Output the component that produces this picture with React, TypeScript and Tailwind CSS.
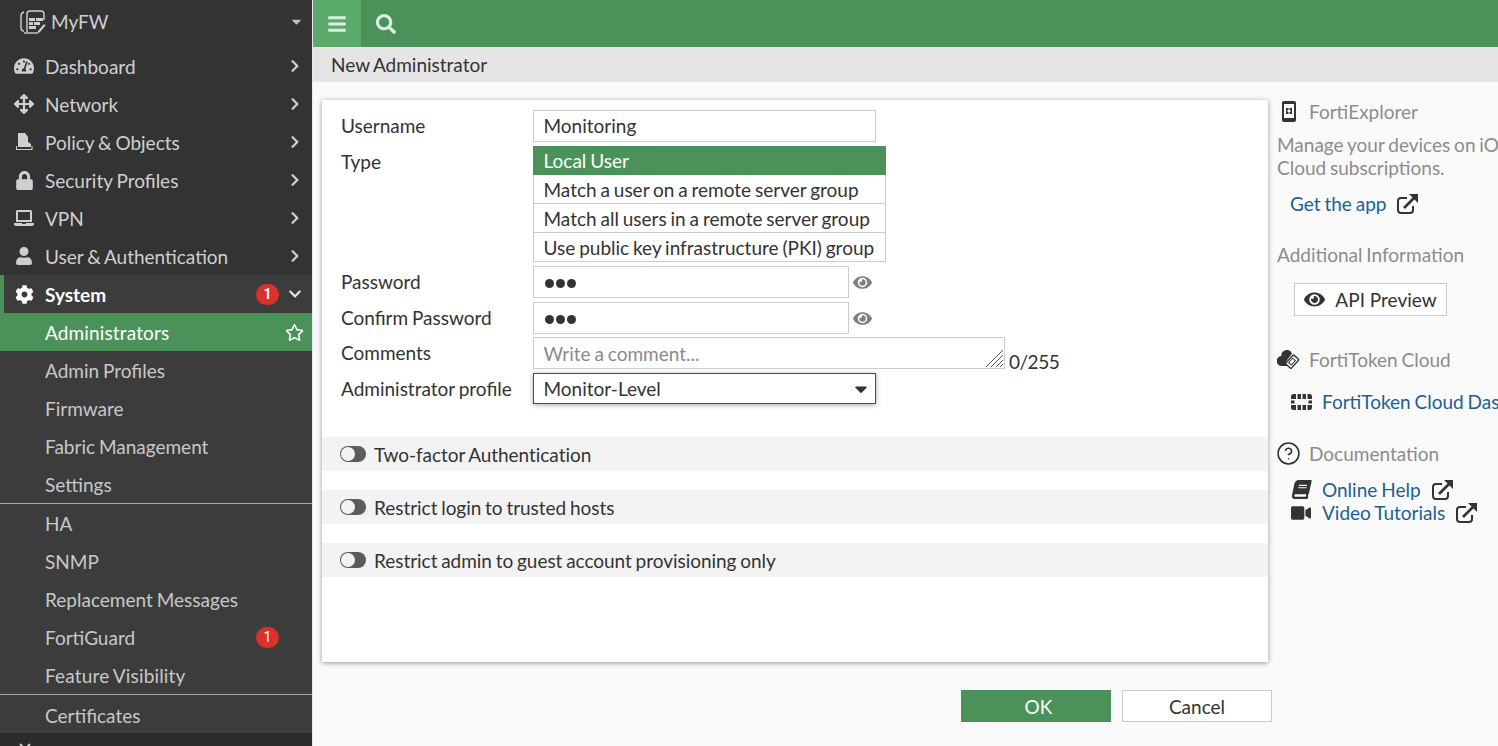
import React from 'react';
import {
  FaTachometerAlt,
  FaArrowsAlt,
  FaLock,
  FaLaptop,
  FaUser,
  FaCog,
  FaChevronRight,
  FaChevronDown,
  FaRegStar,
  FaBars,
  FaSearch,
  FaEye,
  FaBook,
  FaVideo,
  FaCaretDown,
} from 'react-icons/fa';
import { CircleHelp } from 'lucide-react';

const LogoIcon = () => (
  <svg width="26" height="26" viewBox="0 0 26 26" fill="none">
    <path d="M4 23a3 3 0 0 1-3-3V8a4 4 0 0 1 3-4" stroke="#cfcfcf" strokeWidth="1.400" />
    <path d="M7 24V6a3 3 0 0 1 3-3h11a3 3 0 0 1 3 3v6" stroke="#cfcfcf" strokeWidth="1.400" />
    <path d="M4 25h14" stroke="#cfcfcf" strokeWidth="1.400" />
    <path d="M9 10h6v3H9zM16 10h7v3h-7zM9 14h4v3H9zM14 14h6v3h-6zM9 18h7v3H9z" fill="#cfcfcf" />
    <path d="m18 23 6-7 1.500 1.500-6 7-2 .5z" fill="#cfcfcf" />
  </svg>
);

const PolicyIcon = () => (
  <svg width="18" height="18" viewBox="0 0 18 18" fill="#cfcfcf">
    <path d="M3 0h7l3 4v5l3 2v3H3z" />
    <path d="M1 13v4h16.500v-4h-1v3H2v-3z" />
  </svg>
);

const PhoneIcon = () => (
  <svg width="14" height="21" viewBox="0 0 14 21">
    <rect x="0" y="0" width="14" height="21" rx="2" fill="#333" />
    <rect x="2" y="3" width="10" height="14" fill="#fff" />
    <path d="M4 7h2.500v2H5.500v2H6.500v2H4zM10 7H7.500v2h1v2h-1v2H10z" fill="#333" />
  </svg>
);

const TokenCloudIcon = () => (
  <svg width="23" height="19" viewBox="0 0 23 19" className="-ml-[1px]">
    <path d="M5 16a5 5 0 0 1-.6-10A5.500 5.500 0 0 1 15 3.500l-6 8 2.500 4.500z" fill="#333" />
    <rect x="11.500" y="5.500" width="7.500" height="12" rx="1" transform="rotate(42 15 11.500)" fill="#fff" stroke="#333" strokeWidth="1.400" />
    <rect x="13.300" y="8.500" width="3.500" height="6" transform="rotate(42 15 11.500)" fill="none" stroke="#333" strokeWidth="1" />
  </svg>
);

const TokenGridIcon = () => (
  <svg width="21" height="16" viewBox="0 0 21 16" fill="#333" className="shrink-0">
    <path d="M0 2.500A2.500 2.500 0 0 1 2.500 0H5v5H0zM6.500 0h3.500v5H6.500zM11.500 0H15v5h-3.500zM16.500 0h2A2.500 2.500 0 0 1 21 2.500V5h-4.500z" />
    <path d="M0 6.500h3.500v3H0zM17.500 6.500H21v3h-3.500z" />
    <path d="M0 11h5v5H2.500A2.500 2.500 0 0 1 0 13.500zM6.500 11h3.500v5H6.500zM11.500 11H15v5h-3.500zM16.500 11H21v2.500a2.500 2.500 0 0 1-2.500 2.500h-2z" />
  </svg>
);

const ExtLink = () => (
  <svg width="21" height="20" viewBox="0 0 21 20" fill="none" className="shrink-0">
    <path d="M10 4H4a3 3 0 0 0-3 3v9a3 3 0 0 0 3 3h9a3 3 0 0 0 3-3v-4" stroke="#333" strokeWidth="2" />
    <path d="m7 14 10-10" stroke="#333" strokeWidth="2.600" />
    <path d="M12 0h9v9z" fill="#333" />
  </svg>
);

const Badge = () => (
  <span className="flex h-[21px] w-[23px] items-center justify-center rounded-full bg-[#d9312b] font-['Roboto',sans-serif] text-[14px] leading-none text-white">
    1
  </span>
);

const NavItem = ({ icon, label }: { icon: React.ReactNode; label: string }) => (
  <div className="flex h-[38px] shrink-0 items-center text-[#cfcfcf]">
    <span className="flex w-[45px] shrink-0 items-center justify-center pl-[3px]">{icon}</span>
    <span className="flex-1">{label}</span>
    <FaChevronRight size={14} className="mr-[10px] text-[#cfcfcf]" />
  </div>
);

const SubItem = ({ label, badge, className }: { label: string; badge?: boolean; className?: string }) => (
  <div className="flex h-[38px] items-center justify-between pl-[45px] pr-[33px] text-[#c8c8c8]">
    <span className={className}>{label}</span>
    {badge && <Badge />}
  </div>
);

const Sidebar = () => (
  <aside className="flex h-full w-[313px] shrink-0 flex-col overflow-hidden border-r border-[#e9e9e9] bg-[#333333]">
    <div className="flex h-[47px] shrink-0 items-center pb-[5px] pl-[20px] pr-[8px] text-[#cfcfcf]">
      <LogoIcon />
      <span className="ml-[5px] flex-1">MyFW</span>
      <FaCaretDown size={15} className="text-[#bdbdbd]" />
    </div>
    <NavItem icon={<FaTachometerAlt size={20} />} label="Dashboard" />
    <NavItem icon={<FaArrowsAlt size={20} />} label="Network" />
    <NavItem icon={<PolicyIcon />} label="Policy & Objects" />
    <NavItem icon={<FaLock size={19} />} label="Security Profiles" />
    <NavItem icon={<FaLaptop size={20} />} label="VPN" />
    <NavItem icon={<FaUser size={18} />} label="User & Authentication" />
    <div className="shrink-0 bg-[#3c3c3c]">
      <div className="flex h-[38px] items-center border-l-4 border-[#4a9259] font-bold text-white">
        <span className="flex w-[41px] shrink-0 items-center justify-center">
          <FaCog size={19} />
        </span>
        <span className="flex-1">System</span>
        <Badge />
        <FaChevronDown size={14} className="ml-[9px] mr-[10px] text-[#e5e5e5]" />
      </div>
      <div className="flex h-[38px] items-center justify-between bg-[#4a9259] pl-[45px] pr-[8px] text-white">
        <span className="tracking-[0.14px]">Administrators</span>
        <FaRegStar size={19} />
      </div>
      <SubItem label="Admin Profiles" />
      <SubItem label="Firmware" />
      <SubItem label="Fabric Management" />
      <SubItem label="Settings" />
      <div className="border-t border-[#a9a9a9]">
        <SubItem label="HA" />
        <SubItem label="SNMP" />
        <SubItem label="Replacement Messages" />
        <SubItem label="FortiGuard" badge />
        <SubItem label="Feature Visibility" className="tracking-[0.17px]" />
      </div>
      <div className="h-[39px] border-t border-[#a9a9a9] pt-px">
        <SubItem label="Certificates" />
      </div>
    </div>
    <div className="flex-1 bg-[#2b2b2b] pl-[19px] pt-[10px]">
      <svg width="12" height="12" viewBox="0 0 12 12" fill="none" stroke="#cfcfcf" strokeWidth="2">
        <path d="m1 1 10 10M11 1 1 11" />
      </svg>
    </div>
  </aside>
);

const TextInput = ({ value }: { value: string }) => (
  <div className="flex h-[32px] w-[343px] items-center border border-[#cccccc] bg-white pb-px pl-[9.5px] pr-[10px]">{value}</div>
);

const PasswordInput = () => (
  <div className="flex items-center">
    <div className="flex h-[32px] w-[316px] items-center gap-[2px] border border-[#cccccc] bg-white pl-[11px] pt-[2px]">
      <span className="h-[9px] w-[9px] rounded-full bg-[#333]" />
      <span className="h-[9px] w-[9px] rounded-full bg-[#333]" />
      <span className="h-[9px] w-[9px] rounded-full bg-[#333]" />
    </div>
    <FaEye size={19} className="ml-[4px] text-[#808080]" />
  </div>
);

const TypeOption = ({ label, active }: { label: string; active?: boolean }) => (
  <div
    className={
      active
        ? 'flex h-[29px] items-center whitespace-nowrap bg-[#4a9259] pl-[10.5px] text-white'
        : 'flex h-[29px] items-center whitespace-nowrap border-x border-b border-[#cccccc] bg-white pl-[9.5px]'
    }
  >
    {label}
  </div>
);

const FormRow = ({ label, className, children }: { label: string; className?: string; children: React.ReactNode }) => (
  <div className={`flex ${className ?? ''}`}>
    <label className="w-[192px] shrink-0 leading-[32px]">{label}</label>
    {children}
  </div>
);

const ToggleRow = ({ label }: { label: string }) => (
  <div className="mb-[19px] flex h-[34px] items-center bg-[#f3f3f3] pl-[18px]">
    <span className="flex h-[16px] w-[26px] items-center rounded-full bg-[#5c5c5c]">
      <span className="h-[14px] w-[14px] translate-x-[1px] rounded-full bg-[#f3f3f3]" />
    </span>
    <span className="ml-[8px] tracking-[-0.04px]">{label}</span>
  </div>
);

const FormCard = () => (
  <div className="h-[562px] w-[946px] shrink-0 bg-white pt-[10px] shadow-[0_1px_5px_rgba(0,0,0,0.4)]">
    <div className="px-[19px]">
      <FormRow label="Username" className="mb-[4px]">
        <TextInput value="Monitoring" />
      </FormRow>
      <FormRow label="Type" className="mb-[4px]">
        <div className="w-[353px]">
          <TypeOption label="Local User" active />
          <TypeOption label="Match a user on a remote server group" />
          <TypeOption label="Match all users in a remote server group" />
          <TypeOption label="Use public key infrastructure (PKI) group" />
        </div>
      </FormRow>
      <FormRow label="Password" className="mb-[4px]">
        <PasswordInput />
      </FormRow>
      <FormRow label="Confirm Password" className="mb-[3px]">
        <PasswordInput />
      </FormRow>
      <FormRow label="Comments" className="mb-[4px]">
        <div className="relative flex h-[32px] w-[472px] items-center border border-[#cccccc] bg-white pl-[9.5px] text-[#8a8a8a]">
          Write a comment...
          <svg className="absolute bottom-0 right-0" width="19" height="19" viewBox="0 0 19 19" stroke="#555" strokeWidth="1">
            <path d="M1 18 18 1M6 18 18 6M11 18l7-7M15 18l3-3" />
          </svg>
        </div>
        <span className="mb-[-4px] ml-[4px] self-end leading-[22px] tracking-[-0.5px]">0/255</span>
      </FormRow>
      <FormRow label="Administrator profile" className="mb-[32px]">
        <div className="flex h-[31px] w-[343px] items-center justify-between border border-[#4d4d4d] bg-white pl-[9.5px] pr-[4px] shadow-[0_1px_5px_rgba(0,0,0,0.35)]">
          Monitor-Level
          <FaCaretDown size={20} className="text-[#333]" />
        </div>
      </FormRow>
    </div>
    <ToggleRow label="Two-factor Authentication" />
    <ToggleRow label="Restrict login to trusted hosts" />
    <ToggleRow label="Restrict admin to guest account provisioning only" />
  </div>
);

const SideHeading = ({ icon, label }: { icon: React.ReactNode; label: string }) => (
  <div className="flex items-center text-[#8c8c8c]">
    <span className="flex w-[32px] shrink-0 items-center pl-[1px]">{icon}</span>
    {label}
  </div>
);

const SidePanel = () => (
  <div className="ml-[9px] min-w-0 flex-1 overflow-hidden whitespace-nowrap">
    <SideHeading
      icon={
        <span className="pl-[4px]">
          <PhoneIcon />
        </span>
      }
      label="FortiExplorer"
    />
    <p className="mt-[10px] leading-[23px] text-[#8c8c8c]">
      Manage your devices on iOS, Android and FortiCare
      <br />
      Cloud subscriptions.
    </p>
    <a className="ml-[13px] mt-[13px] flex items-center gap-[11px] text-[#1d5f94]">
      Get the app <ExtLink />
    </a>
    <div className="mt-[28px] text-[#8c8c8c]">Additional Information</div>
    <button className="ml-[17px] mt-[17px] flex h-[33px] w-[153px] items-center justify-center gap-[10px] border border-[#cccccc] bg-white">
      <FaEye size={21} className="text-[#333]" /> API Preview
    </button>
    <div className="mt-[32px]">
      <SideHeading icon={<TokenCloudIcon />} label="FortiToken Cloud" />
    </div>
    <a className="ml-[14px] mt-[19px] flex items-center gap-[10px] text-[#1d5f94]">
      <TokenGridIcon /> FortiToken Cloud Dashboard
    </a>
    <div className="mt-[28px]">
      <SideHeading icon={<CircleHelp size={25} strokeWidth={1.5} className="-ml-[2px] text-[#333]" />} label="Documentation" />
    </div>
    <a className="mt-[12px] flex h-[23px] items-center text-[#1d5f94]">
      <span className="flex w-[45px] shrink-0 justify-center pl-[3px]">
        <FaBook size={19} className="-skew-x-12 text-[#333]" />
      </span>
      Online Help
      <span className="ml-[11px]">
        <ExtLink />
      </span>
    </a>
    <a className="flex h-[23px] items-center text-[#1d5f94]">
      <span className="flex w-[45px] shrink-0 justify-center pl-[3px]">
        <FaVideo size={20} className="text-[#333]" />
      </span>
      Video Tutorials
      <span className="ml-[11px]">
        <ExtLink />
      </span>
    </a>
  </div>
);

export default function App() {
  return (
    <div className="flex h-screen w-screen overflow-hidden bg-[#fafafa] font-['Lato',sans-serif] text-[19px] leading-[23px] text-[#333333] [word-spacing:-1px]">
      <Sidebar />
      <main className="flex min-w-0 flex-1 flex-col">
        <div className="flex h-[47px] shrink-0 items-center bg-[#4a9259] text-[#dfeee2]">
          <button className="flex h-full w-[48px] items-center justify-center bg-[#5bab6d]">
            <FaBars size={20} />
          </button>
          <FaSearch size={20} className="ml-[15px]" />
        </div>
        <div className="flex h-[35px] shrink-0 items-center bg-[#e5e5e5] pl-[18px]">New Administrator</div>
        <div className="flex min-h-0 flex-1 pl-[9px] pt-[18px]">
          <div className="flex flex-col">
            <FormCard />
            <div className="mr-[-4px] mt-[28px] flex justify-end gap-[11px]">
              <button className="h-[32px] w-[150px] bg-[#4a9259] pl-[5px] text-white">OK</button>
              <button className="h-[32px] w-[150px] border border-[#cccccc] bg-white">Cancel</button>
            </div>
          </div>
          <SidePanel />
        </div>
      </main>
    </div>
  );
}
